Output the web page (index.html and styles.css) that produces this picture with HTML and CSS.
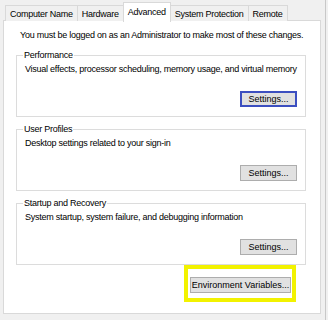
FILE: index.html
```html
<!DOCTYPE html>
<html lang="en">
<head>
  <meta charset="UTF-8">
  <title>System Properties</title>
  <link rel="stylesheet" href="styles.css">
</head>
<body>
  <div class="window">
    <!-- tab strip -->
    <div class="tabs">
      <div class="tab">Computer Name</div>
      <div class="tab">Hardware</div>
      <div class="tab active">Advanced</div>
      <div class="tab">System Protection</div>
      <div class="tab">Remote</div>
    </div>

    <div class="panel">
      <p class="intro">You must be logged on as an Administrator to make most of these changes.</p>

      <fieldset class="group">
        <legend>Performance</legend>
        <p class="group-text">Visual effects, processor scheduling, memory usage, and virtual memory</p>
        <div class="group-actions">
          <button class="btn default">Settings...</button>
        </div>
      </fieldset>

      <fieldset class="group">
        <legend>User Profiles</legend>
        <p class="group-text">Desktop settings related to your sign-in</p>
        <div class="group-actions">
          <button class="btn">Settings...</button>
        </div>
      </fieldset>

      <fieldset class="group">
        <legend>Startup and Recovery</legend>
        <p class="group-text">System startup, system failure, and debugging information</p>
        <div class="group-actions">
          <button class="btn">Settings...</button>
        </div>
      </fieldset>

      <div class="env-row">
        <div class="highlight">
          <button class="btn env">Environment Variables...</button>
        </div>
      </div>
    </div>
  </div>
</body>
</html>
```

FILE: styles.css
```css
* { box-sizing: border-box; }
body {
  margin: 0;
  background: #f0f0f0;
  font-family: "Liberation Sans", Arial, sans-serif;
  font-size: 9px;
  letter-spacing: -0.25px;
  line-height: 12px;
  color: #000;
}
.window {
  width: 326px;
  height: 320px;
  padding-left: 3px;
  border-right: 1px solid #c8c8c8;
}
/* tabs */
.tabs {
  display: flex;
  align-items: flex-end;
  height: 21px;
  padding-left: 2px;
}
.tab {
  height: 16px;
  padding: 2px 4px 0;
  border: 1px solid #d9d9d9;
  border-bottom: none;
  margin-right: -1px;
  background: #f0f0f0;
  white-space: nowrap;
}
.tab.active {
  height: 20px;
  padding-top: 3px;
  background: #fff;
  position: relative;
  z-index: 1;
  margin-bottom: -1px;
}
/* white page */
.panel {
  width: 318px;
  height: 294px;
  margin-top: -1px;
  background: #fff;
  border: 1px solid #d9d9d9;
  padding: 8px 14px 0 12px;
}
.intro {
  margin: 0 0 8px 4px;
  white-space: nowrap;
}
.group {
  margin: 0 0 6px;
  padding: 2px 8px 9px 8px;
  border: 1px solid #dcdcdc;
}
.group legend {
  padding: 0 1px;
  margin-left: -2px;
}
.group-text {
  margin: 0;
  white-space: nowrap;
}
.group-actions {
  display: flex;
  justify-content: flex-end;
  margin-top: 16px;
}
.btn {
  font: inherit;
  color: #000;
  height: 16px;
  padding: 0;
  background: #e1e1e1;
  border: 1px solid #adadad;
}
.group .btn {
  width: 57px;
}
.btn.default {
  border: 2px solid #3c4fc0;
}
.env-row {
  display: flex;
  justify-content: flex-end;
  margin-top: -6px;
  padding-right: 10px;
}
.highlight {
  border: 4px solid #f2f200;
  padding: 8px 1px 5px 2px;
}
.btn.env {
  width: 101px;
}
```
